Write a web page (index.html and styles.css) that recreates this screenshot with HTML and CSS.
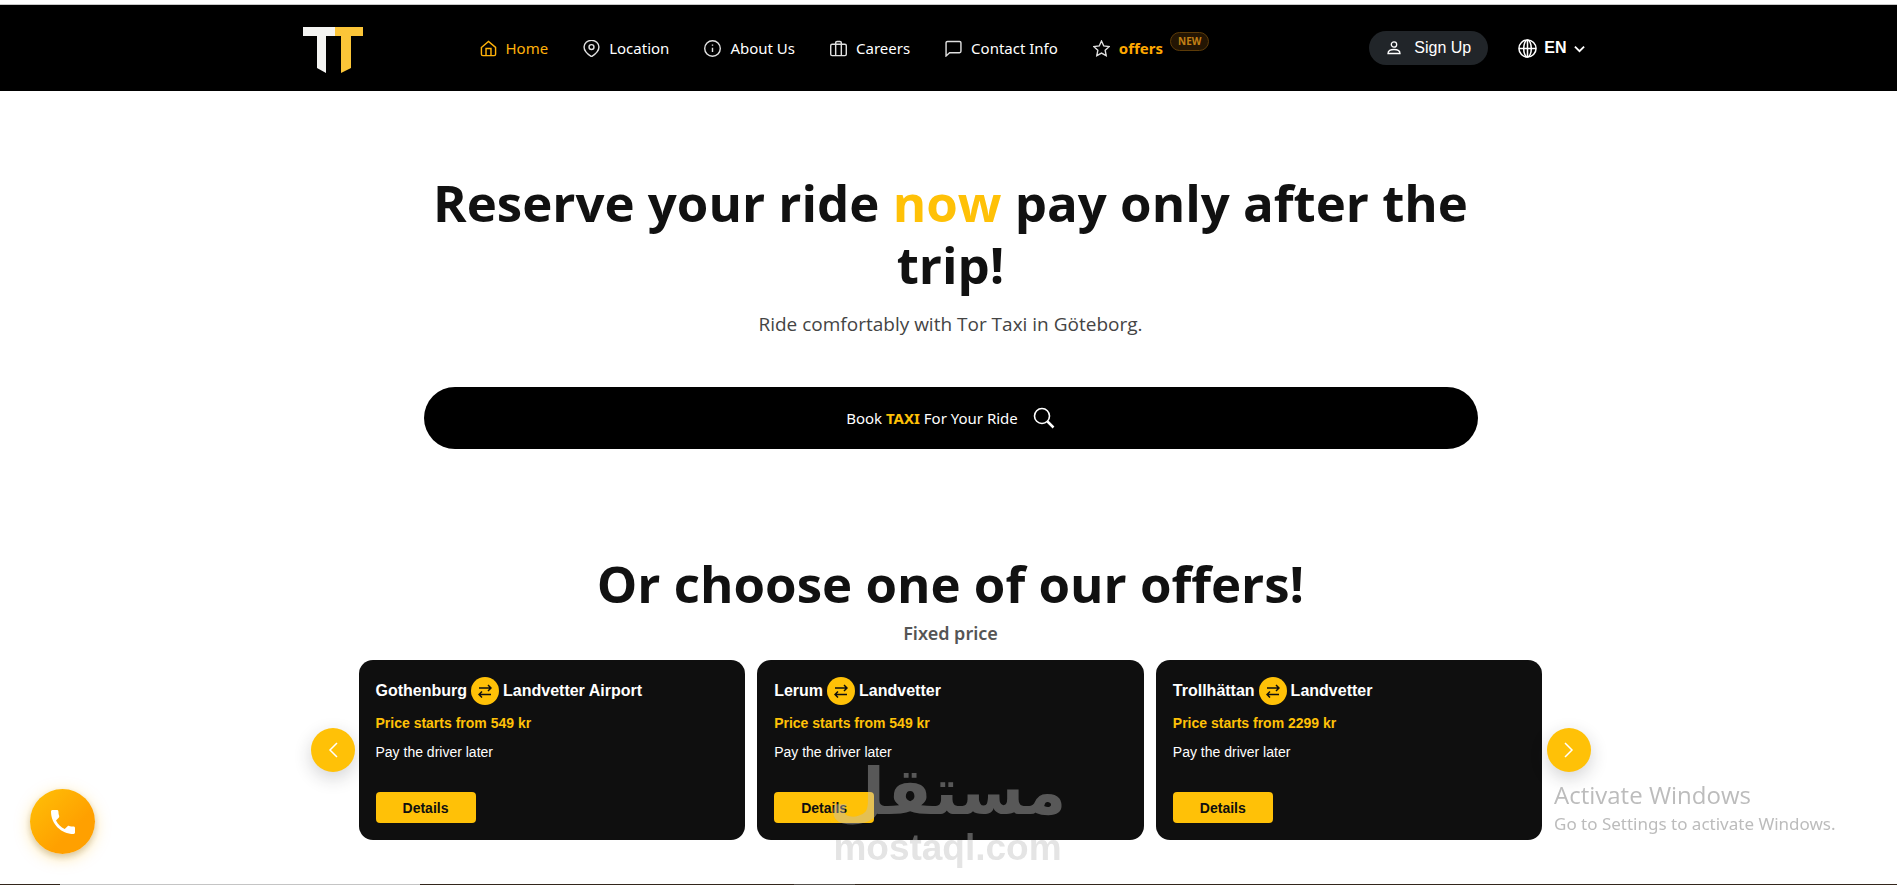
FILE: index.html
```html
<!DOCTYPE html>
<html lang="en">
<head>
<meta charset="utf-8">
<meta name="viewport" content="width=device-width, initial-scale=1">
<title>Tor Taxi</title>
<link rel="stylesheet" href="styles.css">
</head>
<body>
<header class="site-header">
  <div class="header-inner">
    <a class="logo" href="#" aria-label="Tor Taxi">
      <svg width="60" height="46" viewBox="0 0 60 46"><path fill="#f4f4f2" d="M0 0h32v9H23v37l-9-5V9H0z"/><path fill="#fbc538" d="M32 0h28v9H48v32l-10 5V9h-6z"/></svg>
    </a>
    <nav class="nav">
      <a class="nav-link active" href="#"><svg class="icon" viewBox="0 0 24 24"><path d="M2 10.5 12 2l10 8.500V20a2 2 0 0 1-2 2H4a2 2 0 0 1-2-2z"/><path d="M8.500 22V12h7v10"/></svg>Home</a>
      <a class="nav-link" href="#"><svg class="icon" viewBox="0 0 24 24"><path d="M22.500 10c0 7-10.500 13.500-10.500 13.500S1.500 17 1.500 10a10.500 9.500 0 0 1 21 0z"/><circle cx="12" cy="10" r="3.500"/></svg>Location</a>
      <a class="nav-link" href="#"><svg class="icon" viewBox="0 0 24 24"><circle cx="12" cy="12" r="11"/><path d="M12 17v-6M12 8V6.500"/></svg>About Us</a>
      <a class="nav-link" href="#"><svg class="icon" viewBox="0 0 24 24"><rect x="1" y="6" width="22" height="16" rx="2"/><path d="M8 22V4a2 2 0 0 1 2-2h4a2 2 0 0 1 2 2v18"/></svg>Careers</a>
      <a class="nav-link" href="#"><svg class="icon" viewBox="0 0 24 24"><path d="M22.500 16a2 2 0 0 1-2 2H6.500l-5 4.500V4a2 2 0 0 1 2-2h17a2 2 0 0 1 2 2z"/></svg>Contact Info</a>
      <a class="nav-link offers" href="#"><svg class="icon" viewBox="0 0 24 24"><path d="m12 1.500 3.200 6.900 7.500 1-5.500 5.200 1.400 7.500-6.600-3.700-6.600 3.700 1.400-7.500L1.300 9.400l7.500-1z"/></svg>offers<span class="new">NEW</span></a>
    </nav>
    <div class="actions">
      <button class="signup" type="button"><svg class="user" viewBox="0 0 14 14"><circle cx="7" cy="3.500" r="2.700"/><path d="M1 12.500c0-3 2.500-4 6-4s6 1 6 4z"/></svg>Sign Up</button>
      <button class="lang" type="button"><svg class="globe" viewBox="0 0 20 20"><circle cx="10" cy="10" r="9"/><ellipse cx="10" cy="10" rx="4" ry="9"/><path d="M1 10h18M10 1v18"/></svg>EN<svg class="chev" viewBox="0 0 12 12"><path d="m1 4 5 5 5-5"/></svg></button>
    </div>
  </div>
</header>

<main class="main">
  <section class="hero">
    <h1 class="title">Reserve your ride <span class="accent">now</span> pay only after the trip!</h1>
    <p class="subtitle">Ride comfortably with Tor Taxi in Göteborg.</p>
    <button class="search" type="button"><span>Book <b class="accent">TAXI</b> For Your Ride</span><svg class="lens" viewBox="0 0 22 22"><circle cx="9" cy="9" r="7.500"/><path d="m14.500 14.500 6 6" stroke-width="2.500"/></svg></button>
  </section>
  <section class="offers-section">
    <h2 class="title">Or choose one of our offers!</h2>
    <p class="fixed">Fixed price</p>
    <div class="carousel">
      <button class="arrow" type="button" aria-label="Previous"><svg viewBox="0 0 16 16"><path d="m12 1-7 7 7 7"/></svg></button>
      <div class="cards">
        <article class="card">
          <h3 class="route">Gothenburg <span class="swap"><svg viewBox="0 0 14 14"><path d="M1 4h12M10 1l3 3-3 3M13 10.500H1M4 7.500l-3 3 3 3"/></svg></span> Landvetter Airport</h3>
          <p class="price">Price starts from 549 kr</p>
          <p class="note">Pay the driver later</p>
          <button class="details" type="button">Details</button>
        </article>
        <article class="card">
          <h3 class="route">Lerum <span class="swap"><svg viewBox="0 0 14 14"><path d="M1 4h12M10 1l3 3-3 3M13 10.500H1M4 7.500l-3 3 3 3"/></svg></span> Landvetter</h3>
          <p class="price">Price starts from 549 kr</p>
          <p class="note">Pay the driver later</p>
          <button class="details" type="button">Details</button>
        </article>
        <article class="card">
          <h3 class="route">Trollhättan <span class="swap"><svg viewBox="0 0 14 14"><path d="M1 4h12M10 1l3 3-3 3M13 10.500H1M4 7.500l-3 3 3 3"/></svg></span> Landvetter</h3>
          <p class="price">Price starts from 2299 kr</p>
          <p class="note">Pay the driver later</p>
          <button class="details" type="button">Details</button>
        </article>
      </div>
      <button class="arrow" type="button" aria-label="Next"><svg viewBox="0 0 16 16"><path d="m4 1 7 7-7 7"/></svg></button>
    </div>
  </section>
</main>

<a class="call" href="#" aria-label="Call us"><svg viewBox="0 0 24 24"><path d="M0 1.500C0 .6.600 0 1.500 0H6c.8 0 1.400.6 1.400 1.400 0 1.600.3 3.200.8 4.700.1.500 0 1-.3 1.400L5 10.400c1.900 3.800 4.900 6.800 8.700 8.700l2.900-2.900c.4-.4.9-.5 1.400-.3 1.500.5 3 .7 4.600.7.800 0 1.400.6 1.400 1.400v4.600c0 .8-.6 1.400-1.400 1.400C10.100 24 0 13.900 0 1.500z"/></svg></a>
<div class="watermark"><span class="wm-ar" lang="ar" dir="rtl">مستقل</span><span class="wm-en">mostaql.com</span></div>
<div class="activate"><span class="activate-title">Activate Windows</span><span class="activate-text">Go to Settings to activate Windows.</span></div>
<div class="edge"></div>
</body>
</html>
```

FILE: styles.css
```css
* { box-sizing: border-box; }
body {
  margin: 0;
  min-height: 100vh;
  overflow: hidden;
  background: #fff;
  color: #111;
  font-family: "Noto Sans", "Open Sans", sans-serif;
}
h1, h2, h3, p { margin: 0; }
button { border: 0; padding: 0; cursor: pointer; font-family: inherit; }
a { color: inherit; text-decoration: none; }
svg { display: block; flex: none; fill: none; stroke: currentColor; }

.site-header { margin-top: 4px; border-top: 1px solid #c8c8c8; background: #000; color: #fff; }
.header-inner {
  display: flex;
  align-items: center;
  max-width: 1292px;
  height: 86px;
  margin: 0 auto;
  padding-right: 10px;
}
.logo { margin-top: 4px; }
.logo svg { stroke: none; }
.nav { display: flex; align-items: center; gap: 35px; margin-left: 117px; }
.nav-link { display: flex; align-items: center; gap: 9px; font-size: 15px; line-height: 24px; white-space: nowrap; }
.icon { width: 17px; height: 17px; stroke-width: 2; color: #e0e0e0; }
.active, .active .icon { color: #ffb20a; }
.offers { color: #ffa800; font-weight: 700; }
.new {
  margin: -14px 0 0 -2px;
  padding: 0 7px;
  border: 1px solid #5c3b08;
  border-radius: 10px;
  background: #231503;
  color: #c08015;
  font-size: 10px;
  line-height: 17px;
}
.actions { display: flex; align-items: center; gap: 30px; margin-left: auto; font-family: "Liberation Sans", Arial, sans-serif; }
.signup {
  display: flex;
  align-items: center;
  gap: 13px;
  height: 34px;
  padding: 0 17px 0 18px;
  border-radius: 17px;
  background: #212529;
  color: #fff;
  font-size: 16px;
}
.user { width: 14px; height: 14px; stroke-width: 1.300; }
.lang { display: flex; align-items: center; gap: 7px; background: none; color: #fff; font-size: 16px; font-weight: 700; }
.globe { width: 19px; height: 19px; stroke-width: 1.600; }
.chev { width: 11px; height: 11px; stroke-width: 2; }

.main { padding: 80px 0 44px 4px; }
.hero { max-width: 1054px; margin: 0 auto; text-align: center; }
.title { font-family: "Open Sans", "Noto Sans", sans-serif; font-size: 51px; line-height: 62px; font-weight: 700; text-align: center; }
.accent { color: #ffc107; }
.subtitle { margin-top: 14px; color: #444; font-family: "Open Sans", "Noto Sans", sans-serif; font-size: 19px; line-height: 30px; }
.search {
  display: flex;
  align-items: center;
  justify-content: center;
  gap: 15px;
  width: 100%;
  height: 62px;
  margin-top: 48px;
  border-radius: 31px;
  background: #000;
  color: #fff;
  font-size: 15px;
}
.lens { width: 22px; height: 22px; stroke-width: 1.600; }
.offers-section { margin-top: 103px; }
.fixed { margin-top: 5px; color: #555; font-size: 18px; line-height: 28px; font-weight: 600; text-align: center; }
.carousel { display: flex; align-items: center; gap: 4px; max-width: 1280px; margin: 13px auto 0; }
.arrow {
  display: grid;
  place-items: center;
  flex: none;
  width: 44px;
  height: 44px;
  border-radius: 50%;
  background: #ffc107;
  color: #fff;
  box-shadow: 0 6px 18px rgba(33, 37, 41, .2);
}
.arrow svg { width: 16px; height: 16px; stroke-width: 1.500; }
.cards { display: grid; grid-template-columns: repeat(3, 1fr); gap: 12px; flex: 1; }
.card { padding: 17px; border-radius: 14px; background: #0f0f0f; color: #fff; font-family: "Liberation Sans", Arial, sans-serif; }
.route { display: flex; align-items: center; gap: 4px; font-size: 16px; line-height: 28px; }
.swap { display: grid; place-items: center; width: 28px; height: 28px; border-radius: 50%; background: #ffc107; color: #0f0f0f; }
.swap svg { width: 14px; height: 14px; stroke-width: 1.500; }
.price { margin-top: 8px; color: #ffc107; font-size: 14px; line-height: 20px; font-weight: 700; }
.note { margin-top: 9px; font-size: 14px; line-height: 20px; }
.details { display: block; width: 100px; height: 31px; margin-top: 30px; border-radius: 4px; background: #ffc107; color: #0f0f0f; font-size: 14px; font-weight: 700; }

.call {
  position: fixed;
  left: 30px;
  bottom: 31px;
  display: grid;
  place-items: center;
  width: 65px;
  height: 65px;
  border-radius: 50%;
  background: linear-gradient(135deg, #ffc107, #ffa000 65%);
  box-shadow: 0 4px 16px rgba(255, 180, 7, .35), 0 3px 6px rgba(0, 0, 0, .2);
}
.call svg { width: 24px; height: 24px; fill: #fff; stroke: none; }
.watermark {
  position: fixed;
  left: 50%;
  bottom: 17px;
  display: flex;
  flex-direction: column;
  align-items: center;
  width: 240px;
  margin-left: -121px;
  color: #bebebe;
  opacity: .42;
  pointer-events: none;
}
.wm-ar { font-family: "DejaVu Sans", sans-serif; font-size: 65px; line-height: 72px; font-weight: 700; }
.wm-en { font-family: "Liberation Sans", Arial, sans-serif; font-size: 37px; line-height: 40px; font-weight: 700; }
.activate { position: fixed; left: 1554px; bottom: 48px; display: flex; flex-direction: column; color: #bcbcbc; pointer-events: none; white-space: nowrap; }
.activate-title { font-family: "Open Sans", "Noto Sans", sans-serif; font-size: 24px; line-height: 32px; }
.activate-text { font-size: 17px; line-height: 26px; }
.edge { position: fixed; left: 0; right: 0; bottom: 0; height: 1px; background: linear-gradient(90deg, #33261c 60px, #c4c4c4 60px 420px, #33261c 420px 794px, #55504c 794px 855px, #33261c 855px); }
```
